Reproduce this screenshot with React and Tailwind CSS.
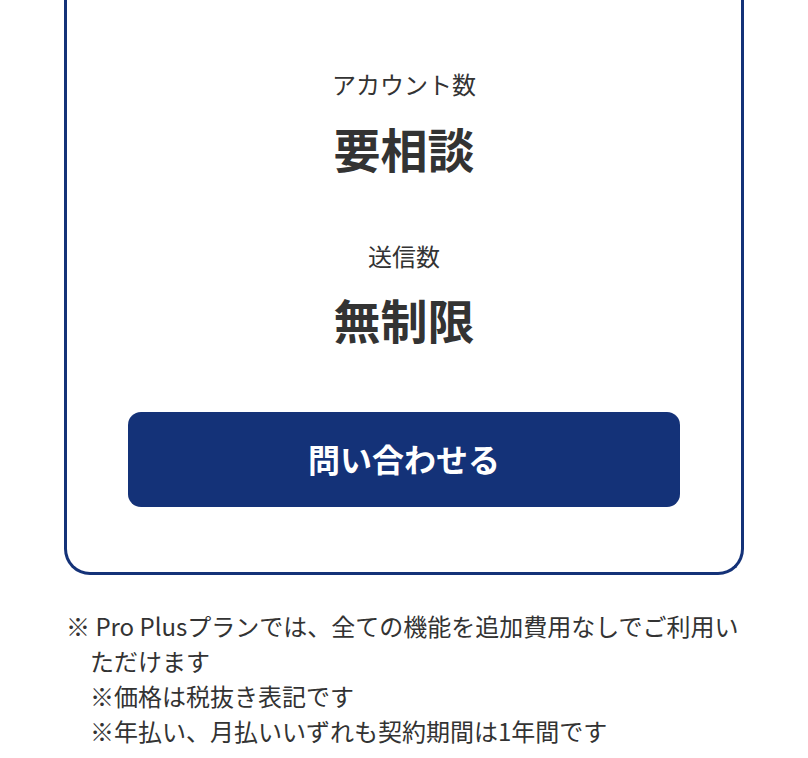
export default function App() {
  const jp = { fontFamily: '"Noto Sans CJK JP", "Noto Sans", sans-serif' };
  return (
    <div className="w-[808px] h-[758px] overflow-hidden bg-white text-[#333333]" style={jp}>
      <div className="mx-[64px] w-[680px] border-x-[3px] border-b-[3px] border-[#143278] rounded-b-[26px] px-[61px] pt-[66px] pb-[65px] flex flex-col items-center">
        <p className="text-[24px] leading-[36px]">アカウント数</p>
        <p className="mt-[16px] text-[47px] leading-[60px] font-bold">要相談</p>
        <p className="mt-[60px] text-[24px] leading-[36px]">送信数</p>
        <p className="mt-[15px] text-[47px] leading-[60px] font-bold">無制限</p>
        <button className="mt-[63px] w-[552px] h-[95px] rounded-[13px] bg-[#143278] text-white text-[32px] leading-[40px] font-bold flex items-center justify-center pb-[4px]">
          問い合わせる
        </button>
      </div>
      <div className="ml-[66px] mt-[33px] text-[24px] leading-[35px]">
        <p className="whitespace-nowrap">※ Pro Plusプランでは、全ての機能を追加費用なしでご利用い</p>
        <p className="pl-[24px]">ただけます</p>
        <p className="pl-[24px]">※価格は税抜き表記です</p>
        <p className="pl-[24px]">※年払い、月払いいずれも契約期間は1年間です</p>
      </div>
    </div>
  );
}
